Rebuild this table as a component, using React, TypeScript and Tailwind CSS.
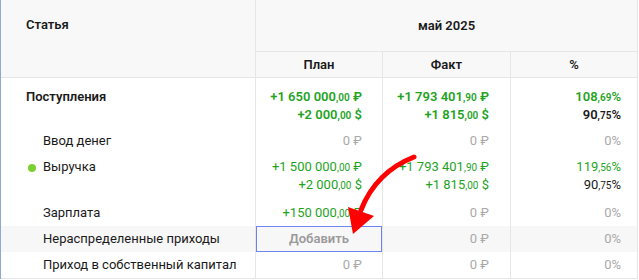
import React from "react";

type Val =
  | { kind: "money"; int: string; dec: string; cur: string; tone: "green" | "black" }
  | { kind: "pct"; int: string; dec?: string; tone: "green" | "black" | "gray" }
  | { kind: "zero"; cur: string }
  | { kind: "add" };

type Row = {
  label: string;
  top?: boolean;
  dot?: boolean;
  shade?: boolean;
  h: string;
  pt: string;
  plan: Val[];
  fact: Val[];
  pct: Val[];
};

const rows: Row[] = [
  {
    label: "Поступления",
    top: true,
    h: "h-[50px]",
    pt: "pt-[10px]",
    plan: [
      { kind: "money", int: "+1 650 000", dec: "00", cur: "₽", tone: "green" },
      { kind: "money", int: "+2 000", dec: "00", cur: "$", tone: "green" },
    ],
    fact: [
      { kind: "money", int: "+1 793 401", dec: "90", cur: "₽", tone: "green" },
      { kind: "money", int: "+1 815", dec: "00", cur: "$", tone: "green" },
    ],
    pct: [
      { kind: "pct", int: "108", dec: "69", tone: "green" },
      { kind: "pct", int: "90", dec: "75", tone: "black" },
    ],
  },
  {
    label: "Ввод денег",
    h: "h-[26px]",
    pt: "pt-[4px]",
    plan: [{ kind: "zero", cur: "₽" }],
    fact: [{ kind: "zero", cur: "₽" }],
    pct: [{ kind: "pct", int: "0", tone: "gray" }],
  },
  {
    label: "Выручка",
    dot: true,
    h: "h-[46px]",
    pt: "pt-[4px]",
    plan: [
      { kind: "money", int: "+1 500 000", dec: "00", cur: "₽", tone: "green" },
      { kind: "money", int: "+2 000", dec: "00", cur: "$", tone: "green" },
    ],
    fact: [
      { kind: "money", int: "+1 793 401", dec: "90", cur: "₽", tone: "green" },
      { kind: "money", int: "+1 815", dec: "00", cur: "$", tone: "green" },
    ],
    pct: [
      { kind: "pct", int: "119", dec: "56", tone: "green" },
      { kind: "pct", int: "90", dec: "75", tone: "black" },
    ],
  },
  {
    label: "Зарплата",
    h: "h-[26px]",
    pt: "pt-[4px]",
    plan: [{ kind: "money", int: "+150 000", dec: "00", cur: "₽", tone: "green" }],
    fact: [{ kind: "zero", cur: "₽" }],
    pct: [{ kind: "pct", int: "0", tone: "gray" }],
  },
  {
    label: "Нераспределенные приходы",
    shade: true,
    h: "h-[26px]",
    pt: "pt-[4px]",
    plan: [{ kind: "add" }],
    fact: [{ kind: "zero", cur: "₽" }],
    pct: [{ kind: "pct", int: "0", tone: "gray" }],
  },
  {
    label: "Приход в собственный капитал",
    h: "h-[26px]",
    pt: "pt-[4px]",
    plan: [{ kind: "zero", cur: "₽" }],
    fact: [{ kind: "zero", cur: "₽" }],
    pct: [{ kind: "pct", int: "0", tone: "gray" }],
  },
];

function tone(t: string) {
  if (t === "green") return "text-[#1fa31f]";
  if (t === "gray") return "text-[#a9a9a9]";
  return "text-[#1a1a1a]";
}

function Value({ v, bold }: { v: Val; bold?: boolean }) {
  const w = bold ? "font-semibold" : "font-normal";
  if (v.kind === "money")
    return (
      <div className={`h-[18px] leading-[18px] whitespace-nowrap ${w} ${tone(v.tone)}`}>
        {v.int}
        <span className="text-[10px]">,{v.dec}</span> {v.cur}
      </div>
    );
  if (v.kind === "pct")
    return (
      <div className={`h-[18px] leading-[18px] whitespace-nowrap ${w} ${tone(v.tone)}`}>
        {v.int}
        {v.dec && <span className="text-[10px]">,{v.dec}</span>}%
      </div>
    );
  if (v.kind === "zero")
    return <div className="h-[18px] leading-[18px] text-[#a9a9a9]">0 {v.cur}</div>;
  return null;
}

function Cell({ vals, bold, w, pr, pt }: { vals: Val[]; bold?: boolean; w: string; pr: string; pt: string }) {
  if (vals[0].kind === "add")
    return (
      <div className={`${w} border-r border-[#e6e6e6] h-full`}>
        <div className="h-full border border-[#6e82f0] flex items-center justify-center font-semibold text-[#9a9a9a]">
          Добавить
        </div>
      </div>
    );
  return (
    <div className={`${w} border-r border-[#e6e6e6] flex flex-col items-end ${pr} ${pt}`}>
      {vals.map((v, i) => (
        <Value key={i} v={v} bold={bold} />
      ))}
    </div>
  );
}

export default function App() {
  return (
    <div className="relative w-[639px] h-[280px] bg-white text-[13px] text-[#1a1a1a] font-['Roboto',sans-serif] overflow-hidden">
      <div className="w-[638px] border-l border-[#8ea8de]">
        {/* header */}
        <div className="flex h-[78px] bg-[#f8f8f8] border-b border-[#e6e6e6]">
          <div className="w-[255px] border-r border-[#e6e6e6] pl-[25px] pt-[16px] font-semibold leading-[18px]">
            Статья
          </div>
          <div className="w-[382px] border-r border-[#e6e6e6] flex flex-col">
            <div className="h-[52px] border-b border-[#e6e6e6] flex items-center justify-center font-semibold">
              май 2025
            </div>
            <div className="flex flex-1 font-semibold">
              <div className="w-[127px] border-r border-[#e6e6e6] flex items-center justify-center">План</div>
              <div className="w-[128px] border-r border-[#e6e6e6] flex items-center justify-center">Факт</div>
              <div className="flex-1 flex items-center justify-center">%</div>
            </div>
          </div>
        </div>

        {/* body */}
        <div className="border-b border-[#e6e6e6]">
          {rows.map((r) => (
            <div key={r.label} className={`flex ${r.h} ${r.shade ? "bg-[#f7f7f7]" : ""}`}>
              <div
                className={`w-[255px] border-r border-[#e6e6e6] flex items-start leading-[18px] ${r.pt} ${
                  r.top ? "pl-[25px] font-semibold" : "pl-[42px]"
                } relative`}
              >
                {r.dot && (
                  <span className="absolute left-[27px] top-[10px] w-[8px] h-[8px] rounded-full bg-[#7bd030]" />
                )}
                {r.label}
              </div>
              <Cell vals={r.plan} bold={r.top} w="w-[127px]" pr="pr-[20px]" pt={r.pt} />
              <Cell vals={r.fact} bold={r.top} w="w-[128px]" pr="pr-[21px]" pt={r.pt} />
              <Cell vals={r.pct} bold={r.top} w="w-[127px]" pr="pr-[16px]" pt={r.pt} />
            </div>
          ))}
        </div>
      </div>

      {/* annotation arrow */}
      <svg className="absolute left-0 top-0 pointer-events-none" width="639" height="280" viewBox="0 0 639 280">
        <path d="M414 157 Q 376 172 361 210" fill="none" stroke="#ff0000" strokeWidth="5" strokeLinecap="round" />
        <polygon points="348,207 374,216 353,234" fill="#ff0000" />
      </svg>
    </div>
  );
}
